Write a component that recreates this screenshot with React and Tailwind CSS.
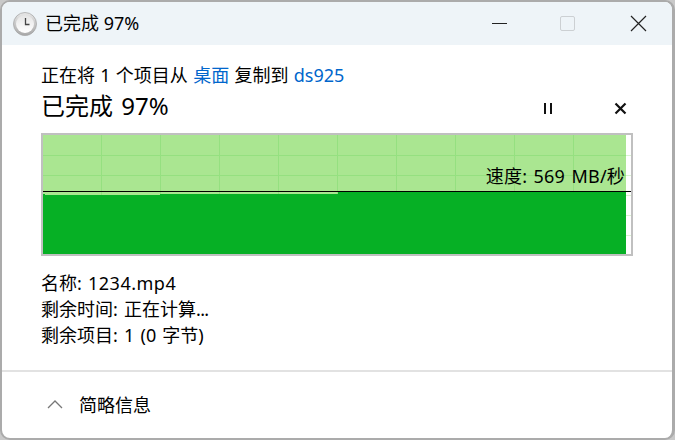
import React from 'react';

const font = { fontFamily: '"Noto Sans", "Noto Sans CJK SC", sans-serif' };

const ClockIcon = () => (
  <svg width="24" height="24" viewBox="0 0 24 24">
    <defs>
      <linearGradient id="rim" x1="0" y1="0" x2="0" y2="1">
        <stop offset="0" stopColor="#e8e8e8" />
        <stop offset="1" stopColor="#a8a8a8" />
      </linearGradient>
      <linearGradient id="face" x1="0" y1="0" x2="0" y2="1">
        <stop offset="0" stopColor="#e4e4e4" />
        <stop offset="1" stopColor="#ffffff" />
      </linearGradient>
    </defs>
    <circle cx="12" cy="12" r="11.5" fill="url(#rim)" stroke="#a6a6a6" strokeWidth="0.75" />
    <circle cx="12" cy="12" r="9" fill="url(#face)" />
    <path d="M12.5 6v6.5h4" fill="none" stroke="#444" strokeWidth="1.3" />
  </svg>
);

// throughput graph: grid, filled area and the speed line
const Graph = () => {
  const vLines = [101, 160, 219, 278, 337, 396, 455, 514, 573];
  const hLines = [155, 175, 195, 215, 235];
  return (
    <svg className="absolute inset-0" width="588" height="119" viewBox="43 135 588 119">
      <rect x="43" y="135" width="583" height="119" fill="#aae691" />
      {vLines.map(x => (
        <rect key={x} x={x} y="135" width="1" height="60" fill="#95e080" />
      ))}
      {hLines.map(y => (
        <rect key={y} x="43" y={y} width="583" height="1" fill="#95e080" />
      ))}
      {hLines.map(y => (
        <rect key={y} x="626" y={y} width="5" height="1" fill="#d8f5d0" />
      ))}
      <path d="M43 194H45V195H160V194H338V192H626V254H43Z" fill="#06b025" />
      <rect x="43" y="191" width="588" height="1" fill="#000" />
    </svg>
  );
};

const App = () => {
  return (
    <div className="w-[675px] h-[440px] bg-[#c9c9c9] overflow-hidden" style={font}>
      <div className="w-full h-full bg-white border-2 border-[#ababab] border-r-[3px] rounded-[10px] overflow-hidden flex flex-col">
        <div className="h-[43px] shrink-0 bg-[#eef4f8] flex items-center pl-[11px]">
          <ClockIcon />
          <span className="ml-[8px] text-[18px] text-black">已完成 97%</span>
          <div className="ml-auto flex items-center">
            <svg width="16" height="16" viewBox="0 0 16 16" className="mr-[52px]">
              <rect x="0" y="7" width="15" height="1" fill="#222" />
            </svg>
            <div className="w-[15px] h-[15px] rounded-[2px] border border-[#ccd0d3] mr-[55px]"></div>
            <svg width="17" height="17" viewBox="0 0 17 17" className="mr-[25px]">
              <path d="M1 1L16 16M16 1L1 16" stroke="#222" strokeWidth="1.2" />
            </svg>
          </div>
        </div>

        <div className="flex-1 pl-[39px] pt-[18px]">
          <div className="text-[18px] leading-[24px] text-black [word-spacing:0.6px]">
            正在将 1 个项目从 <span className="text-[#0066cc]">桌面</span> 复制到 <span className="text-[#0066cc]">ds925</span>
          </div>
          <div className="flex items-center h-[33px] mb-[13px]">
            <span className="text-[24px] text-black leading-[33px] pt-[3px] [word-spacing:2px]">已完成 97%</span>
            <div className="ml-auto flex items-center mr-[45px] mt-[10px]">
              <svg width="10" height="12" viewBox="0 0 10 12" className="mr-[61px]">
                <rect x="1" y="0" width="2" height="11" fill="#111" />
                <rect x="7" y="0" width="2" height="11" fill="#111" />
              </svg>
              <svg width="13" height="13" viewBox="0 0 13 13">
                <path d="M1.5 1.5L11.5 11.5M11.5 1.5L1.5 11.5" stroke="#111" strokeWidth="2.2" />
              </svg>
            </div>
          </div>

          <div className="relative w-[592px] h-[123px] border-2 border-[#c0c0c0]">
            <Graph />
            <span className="absolute right-[6px] top-[29px] text-[18px] leading-[24px] text-black whitespace-nowrap [word-spacing:1.5px] tracking-[0.2px]">速度: 569 MB/秒</span>
          </div>

          <div className="mt-[14px] text-[18px] leading-[26px] text-black [word-spacing:1.5px]">
            <div>名称: <span className="tracking-[0.5px]">1234.mp4</span></div>
            <div>剩余时间: 正在计算<span className="tracking-[-0.7px]">...</span></div>
            <div>剩余项目: 1 (0 字节)</div>
          </div>
        </div>

        <div className="h-[68px] shrink-0 border-t-2 border-[#e2e2e2] flex items-center pl-[45px] pt-[1px]">
          <svg width="16" height="10" viewBox="0 0 16 10" className="mb-[4px]">
            <path d="M1 9L8 2L15 9" fill="none" stroke="#777" strokeWidth="1.3" />
          </svg>
          <span className="ml-[16px] text-[18px] text-black">简略信息</span>
        </div>
      </div>
    </div>
  );
};

export default App;
